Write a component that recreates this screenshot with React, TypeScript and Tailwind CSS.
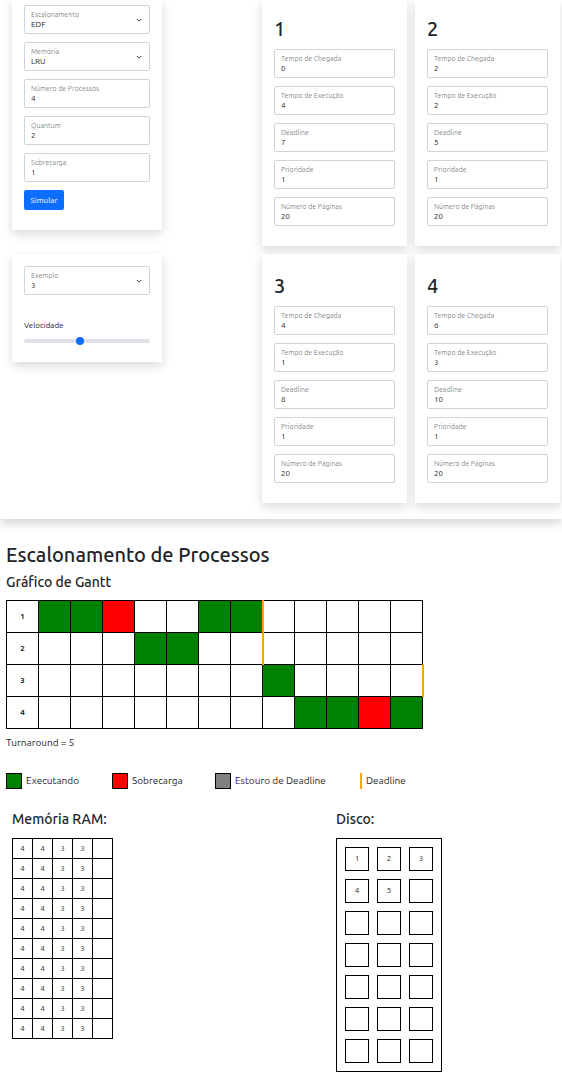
import { useId } from "react";

type FieldProps = { label: string; value: string };

const boxClass =
  "block h-[29px] w-full appearance-none rounded-[2px] border border-[#ced4da] bg-white px-[6px] pt-[10px] text-[8px] leading-[12px] text-[#212529] outline-none focus:border-[#86b7fe]";
const labelClass =
  "pointer-events-none absolute left-[7px] top-1 text-[7px] leading-[10px] text-[#212529]/60";

function NumberField({ label, value }: FieldProps) {
  const id = useId();
  return (
    <div className="relative">
      <input id={id} type="number" defaultValue={value} className={boxClass} />
      <label htmlFor={id} className={labelClass}>
        {label}
      </label>
    </div>
  );
}

function SelectField({ label, value, options }: FieldProps & { options: string[] }) {
  const id = useId();
  return (
    <div className="relative">
      <select id={id} defaultValue={value} className={boxClass}>
        {options.map((o) => (
          <option key={o}>{o}</option>
        ))}
      </select>
      <label htmlFor={id} className={labelClass}>
        {label}
      </label>
      <svg
        viewBox="0 0 16 16"
        className="pointer-events-none absolute right-[8px] top-[12px] size-[6px]"
        fill="none"
        stroke="#343a40"
        strokeWidth="2.5"
        strokeLinecap="round"
        strokeLinejoin="round"
      >
        <path d="m3 6 5 5 5-5" />
      </svg>
    </div>
  );
}

const cardShadow = "bg-white shadow-[0_4px_10px_rgba(0,0,0,0.15)]";

const processes = [
  { id: 1, values: ["0", "4", "7", "1", "20"] },
  { id: 2, values: ["2", "2", "5", "1", "20"] },
  { id: 3, values: ["4", "1", "8", "1", "20"] },
  { id: 4, values: ["6", "3", "10", "1", "20"] },
];
const processFields = [
  "Tempo de Chegada",
  "Tempo de Execução",
  "Deadline",
  "Prioridade",
  "Número de Páginas",
];

function ProcessCard({ id, values }: { id: number; values: string[] }) {
  return (
    <section className={`${cardShadow} px-3 pb-5 ${id > 2 ? "pt-5" : "pt-[17px]"}`}>
      <h2 className="mb-2 text-[20px] leading-6 font-medium">{id}</h2>
      <div className="flex flex-col gap-2">
        {processFields.map((f, i) => (
          <NumberField key={f} label={f} value={values[i]} />
        ))}
      </div>
    </section>
  );
}

// x = running, s = overhead, . = idle
const gantt = [
  { id: 1, slots: "xxs..xx.....", deadline: 6 },
  { id: 2, slots: "...xx.......", deadline: 6 },
  { id: 3, slots: ".......x....", deadline: 11 },
  { id: 4, slots: "........xxsx", deadline: -1 },
];
const slotColor: Record<string, string> = {
  x: "bg-[#008000]",
  s: "bg-[#ff0000]",
  ".": "bg-white",
};

const ramRow = ["4", "4", "3", "3", ""];
const disk = ["1", "2", "3", "4", "5", ...Array<string>(16).fill("")];

function Swatch({ color }: { color: string }) {
  return <span className={`size-4 border border-black ${color}`} />;
}

export default function App() {
  return (
    <div className="bg-white font-['Ubuntu','Noto_Sans',sans-serif] text-[#212529]">
      <div className="flex items-start justify-between pr-[2px] pb-4 pl-3 shadow-[0_4px_10px_rgba(0,0,0,0.18)]">
        <div className="flex w-[150px] flex-col gap-6">
          <form
            className={`${cardShadow} flex flex-col gap-2 px-3 pt-[5px] pb-5`}
            onSubmit={(e) => e.preventDefault()}
          >
            <SelectField label="Escalonamento" value="EDF" options={["FIFO", "SJF", "RR", "EDF"]} />
            <SelectField label="Memória" value="LRU" options={["FIFO", "LRU"]} />
            <NumberField label="Número de Processos" value="4" />
            <NumberField label="Quantum" value="2" />
            <NumberField label="Sobrecarga" value="1" />
            <button
              type="submit"
              className="h-5 w-10 rounded-[2px] bg-[#0d6efd] pt-px text-center text-[8px] leading-3 text-white"
            >
              Simular
            </button>
          </form>
          <section className={`${cardShadow} px-3 pt-3 pb-[17px]`}>
            <SelectField label="Exemplo" value="3" options={["1", "2", "3", "4"]} />
            <label htmlFor="speed" className="mt-[25px] block text-[8px] leading-3">
              Velocidade
            </label>
            <input
              id="speed"
              type="range"
              min="0"
              max="100"
              defaultValue="44"
              className="mt-[5px] block h-2 w-full appearance-none bg-transparent [&::-webkit-slider-runnable-track]:h-1 [&::-webkit-slider-runnable-track]:rounded-full [&::-webkit-slider-runnable-track]:bg-[#dee2e6] [&::-webkit-slider-thumb]:-mt-[2px] [&::-webkit-slider-thumb]:size-2 [&::-webkit-slider-thumb]:appearance-none [&::-webkit-slider-thumb]:rounded-full [&::-webkit-slider-thumb]:bg-[#0d6efd]"
            />
          </section>
        </div>
        <div className="grid w-[298px] grid-cols-2 gap-2">
          {processes.map((p) => (
            <ProcessCard key={p.id} id={p.id} values={p.values} />
          ))}
        </div>
      </div>

      <main className="px-[6px] pt-6">
        <h1 className="text-[20px] leading-6 font-medium">Escalonamento de Processos</h1>
        <h2 className="mt-[5px] text-[14px] leading-5 font-medium">Gráfico de Gantt</h2>
        <table className="mt-2 w-0 table-fixed border-collapse">
          <colgroup>
            {Array.from({ length: 13 }, (_, i) => (
              <col key={i} className="w-8" />
            ))}
          </colgroup>
          <tbody>
            {gantt.map((row) => (
              <tr key={row.id} className="h-8">
                <th className="border border-black p-0 text-center text-[8px] leading-3 font-bold">
                  {row.id}
                </th>
                {row.slots.split("").map((s, i) => (
                  <td
                    key={i}
                    className={`border border-black p-0 ${slotColor[s]} ${
                      i === row.deadline ? "border-r-2 border-r-[#ffa500]" : ""
                    }`}
                  />
                ))}
              </tr>
            ))}
          </tbody>
        </table>
        <p className="mt-2 text-[10px] leading-3">Turnaround = 5</p>

        <ul className="mt-6 grid grid-cols-[106px_103px_145px_auto] text-[10px] leading-4">
          <li className="flex gap-1">
            <Swatch color="bg-[#008000]" />
            Executando
          </li>
          <li className="flex gap-1">
            <Swatch color="bg-[#ff0000]" />
            Sobrecarga
          </li>
          <li className="flex gap-1">
            <Swatch color="bg-[#808080]" />
            Estouro de Deadline
          </li>
          <li className="flex gap-1">
            <span className="h-4 w-[2px] bg-[#ffa500]" />
            Deadline
          </li>
        </ul>

        <div className="mt-5 grid grid-cols-[324px_auto] items-start px-[6px]">
          <section>
            <h2 className="text-[14px] leading-5 font-medium">Memória RAM:</h2>
            <table className="mt-[9px] w-[101px] table-fixed border-collapse">
              <tbody>
                {Array.from({ length: 10 }, (_, r) => (
                  <tr key={r} className="h-5">
                    {ramRow.map((v, c) => (
                      <td
                        key={c}
                        className="border border-black p-0 text-center text-[8px] leading-3"
                      >
                        {v}
                      </td>
                    ))}
                  </tr>
                ))}
              </tbody>
            </table>
          </section>
          <section>
            <h2 className="text-[14px] leading-5 font-medium">Disco:</h2>
            <div className="mt-[9px] inline-grid grid-cols-3 gap-2 border border-black p-2 align-top">
              {disk.map((v, i) => (
                <div
                  key={i}
                  className="flex size-6 items-center justify-center border border-black text-[8px] leading-3"
                >
                  {v}
                </div>
              ))}
            </div>
          </section>
        </div>
      </main>
    </div>
  );
}
